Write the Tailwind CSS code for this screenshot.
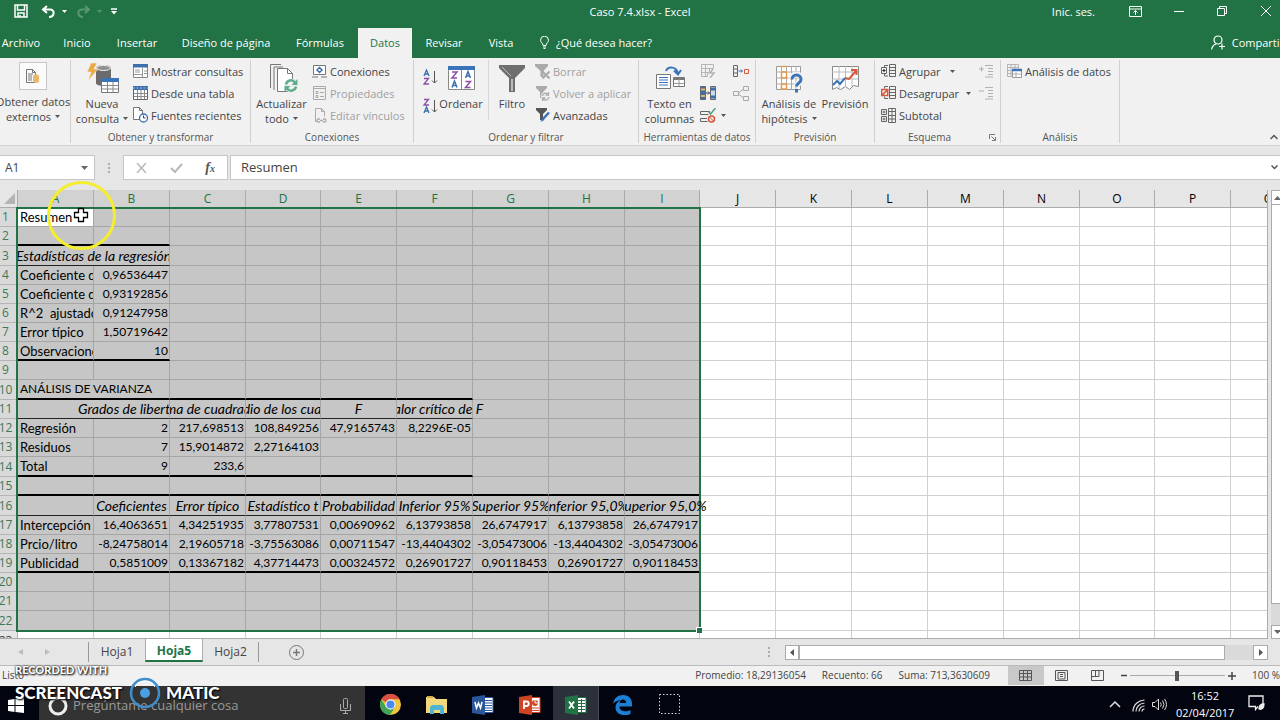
<!DOCTYPE html>
<html lang="es">
<head>
<meta charset="utf-8">
<title>Caso 7.4.xlsx - Excel</title>
<script src="https://cdn.jsdelivr.net/npm/@tailwindcss/browser@4"></script>
</head>
<body class="relative flex h-screen flex-col overflow-hidden bg-[#e6e6e6] font-['Open_Sans','Noto_Sans',sans-serif] text-[11px] leading-[15px] text-[#444]">

<header class="shrink-0 bg-[#217346] text-white">
  <div class="grid h-[28px] grid-cols-3 pb-[6px]">
    <div class="flex items-center gap-[9px] pl-[14px]">
      <button aria-label="Guardar"><svg width="14" height="14" viewBox="0 0 14 14" fill="none" stroke="#fff" stroke-width="1.5"><path d="M1 1h12v12H1zM3.500 1v5h7V1M4 13V9h6v4M6 11v2"/></svg></button>
      <button aria-label="Deshacer" class="ml-[4px] flex items-center gap-[6px]"><svg width="15" height="13" viewBox="0 0 15 13" fill="none" stroke="#fff" stroke-width="2"><path d="M6 1L2 4.500 6 8M2 4.500h7c5 0 5 7-1 7.500"/></svg><svg width="5" height="3"><path d="M0 0h5L2.500 3z" fill="#fff"/></svg></button>
      <button aria-label="Rehacer" class="flex items-center gap-[6px] opacity-25"><svg width="15" height="13" viewBox="0 0 15 13" fill="none" stroke="#fff" stroke-width="2"><path d="M9 1l4 3.500L9 8M13 4.500H6c-5 0-5 7 1 7.500"/></svg><svg width="5" height="3"><path d="M0 0h5L2.500 3z" fill="#fff"/></svg></button>
      <button aria-label="Personalizar"><svg width="6" height="7"><path d="M0 1h6" stroke="#fff" stroke-width="1.500"/><path d="M0 3h6L3 6.500z" fill="#fff"/></svg></button>
    </div>
    <h1 class="flex items-center justify-center">Caso 7.4.xlsx - Excel</h1>
    <div class="flex items-center justify-end pr-[9px]">
      <button>Inic. ses.</button>
      <button aria-label="Opciones de cinta" class="ml-[34px]"><svg width="13" height="11" viewBox="0 0 13 11" fill="none" stroke="#fff"><path d="M.5.5h12v10H.5zM.5 3h12M6.500 9V4.500M4.500 6.500l2-2 2 2"/></svg></button>
      <button aria-label="Minimizar" class="ml-[32px]"><svg width="10" height="10" stroke="#fff"><path d="M0 5.500h10"/></svg></button>
      <button aria-label="Restaurar" class="ml-[33px]"><svg width="10" height="10" viewBox="0 0 10 10" fill="none" stroke="#fff"><path d="M.5 2.500h7v7h-7zM2.500 2.500v-2h7v7h-2"/></svg></button>
      <button aria-label="Cerrar" class="ml-[34px]"><svg width="10" height="10" stroke="#fff"><path d="M0 0l10 10M10 0L0 10"/></svg></button>
    </div>
  </div>
  <nav class="flex h-[30px] items-stretch overflow-hidden whitespace-nowrap [&>button]:pb-[1px]">
    <button class="w-[50px] pr-[8px]">Archivo</button>
    <button class="w-[54px]">Inicio</button>
    <button class="w-[66px]">Insertar</button>
    <button class="w-[112px]">Diseño de página</button>
    <button class="w-[76px]">Fórmulas</button>
    <button class="w-[54px] bg-[#f1f1f1] text-[#217346]">Datos</button>
    <button class="w-[64px]">Revisar</button>
    <button class="w-[50px]">Vista</button>
    <button class="ml-[14px] flex items-center gap-[7px]"><svg width="9" height="13" viewBox="0 0 9 13" fill="none" stroke="#fff"><path d="M3 9.500C3 7 .5 6.500.5 4.200a4 4 0 0 1 8 0C8.500 6.500 6 7 6 9.500zM3 11h3M3.500 12.500h2"/></svg>¿Qué desea hacer?</button>
    <button class="-mr-[4px] ml-auto flex items-center gap-[7px]"><svg width="14" height="15" viewBox="0 0 14 15" fill="none" stroke="#fff" stroke-width="1.200"><circle cx="7" cy="5" r="4"/><path d="M.6 14.500c.4-3 2-4.500 4.400-5.500M8 11.500h6M11 8.500v6"/></svg>Compartir</button>
  </nav>
</header>

<!-- Cinta de opciones -->
<section class="flex h-[88px] shrink-0 border-b border-[#d2d2d2] bg-[#f1f1f1] pt-[2px] whitespace-nowrap text-[#444]">
  <div class="mb-[2px] flex w-[71px] shrink-0 flex-col border-r border-[#d0d0d0]">
    <button class="flex w-[66px] flex-col items-center pt-[2px]">
      <span class="mb-[4px] flex size-[28px] items-center justify-center border border-[#c6c6c6] bg-[#fafafa]"><svg width="16" height="16" viewBox="0 0 16 16" fill="none"><path d="M1.500 1.500h6l3 3v10h-9zM7.500 1.500v3h3M3 6h5M3 8h4M3 10h4M3 12h4" stroke="#777"/><path d="M8 8v5c0 2.500 6 2.500 6 0V8c0-2-6-2-6 0" fill="#e9b86b"/></svg></span>
      <span>Obtener datos</span><span class="flex items-center gap-[4px]">externos <svg width="5" height="3"><path d="M0 0h5L2.500 3z" fill="#555"/></svg></span>
    </button>
  </div>

  <div class="mb-[2px] flex w-[180px] shrink-0 flex-col border-r border-[#d0d0d0]">
    <div class="flex h-[71px]">
      <button class="flex w-[62px] flex-col items-center self-start pt-[3px]">
        <svg class="mb-[3px] ml-[2px]" width="32" height="30" viewBox="0 0 32 30"><path d="M9 5c0-4 15-4 15 0v15c0 4-15 4-15 0z" fill="#6b6b6b"/><ellipse cx="16.500" cy="5" rx="7" ry="2.500" fill="#909090" stroke="#f1f1f1"/><path d="M4 0h6L7 6h4L1 18l3-9H0z" fill="#eda943" stroke="#f1f1f1" stroke-width=".6"/><path d="M14.500 16.500h17v13h-17z" fill="#fff" stroke="#777"/><path d="M14 15h18v4H14z" fill="#3b73b9"/><path d="M15 22.500h16M15 26h16M20.500 19v10M26 19v10" stroke="#888"/></svg>
        <span>Nueva</span><span class="flex items-center gap-[4px]">consulta <svg width="5" height="3"><path d="M0 0h5L2.500 3z" fill="#555"/></svg></span>
      </button>
      <div class="flex flex-col">
        <button class="flex h-[22px] items-center gap-[3px]"><svg width="15" height="14" viewBox="0 0 15 14"><path d="M.5.500h14v13H.5z" fill="#fff" stroke="#888"/><path d="M0 0h15v3.500H0z" fill="#3b6fae"/><path d="M2 6h5M2 8h5M9.500 4v9M11 7h3M11 9.500h3M1 10.500h8" stroke="#999"/></svg>Mostrar consultas</button>
        <button class="flex h-[22px] items-center gap-[3px]"><svg width="15" height="14" viewBox="0 0 15 14"><path d="M.5.500h14v13H.5z" fill="#fff" stroke="#666"/><path d="M0 0h15v4H0z" fill="#3b6fae"/><path d="M0 2h15" stroke="#9fc0e6" stroke-dasharray="2 1.500"/><path d="M1 7.500h13M1 10.500h13M4.500 4v9M8 4v9M11.500 4v9" stroke="#888"/></svg>Desde una tabla</button>
        <button class="flex h-[22px] items-center gap-[3px]"><svg width="15" height="16" viewBox="0 0 15 16" fill="none"><path d="M.5.500h6l3 3v9h-9zM6.500.500v3h3" fill="#fff" stroke="#777"/><circle cx="10.500" cy="11" r="4" fill="#fff" stroke="#3b6fae" stroke-width="1.300"/><path d="M10.500 8.500V11h2" stroke="#444"/></svg>Fuentes recientes</button>
      </div>
    </div>
    <div class="text-center text-[10px] leading-[12px] text-[#555]">Obtener y transformar</div>
  </div>

  <div class="mb-[2px] flex w-[163px] shrink-0 flex-col border-r border-[#d0d0d0]">
    <div class="flex h-[71px]">
      <button class="flex w-[61px] flex-col items-center self-start pt-[4px]">
        <svg class="mb-[3px] ml-[4px]" width="28" height="29" viewBox="0 0 28 29"><path d="M.5 24V.5H11M4 26V3h9" fill="none" stroke="#777"/><path d="M7.500 4.500h10l5 5v18h-15z" fill="#fff" stroke="#777"/><path d="M17.500 4.500v5h5" fill="none" stroke="#777"/><circle cx="21" cy="21.500" r="7" fill="#f1f1f1"/><path d="M16 20.500a5 5 0 0 1 9-2M26 22.500a5 5 0 0 1-9 2" fill="none" stroke="#5fae8b" stroke-width="2.500"/><path d="M27.500 15v6h-6zM14.500 28v-6h6z" fill="#5fae8b"/></svg>
        <span>Actualizar</span><span class="flex items-center gap-[4px]">todo <svg width="5" height="3"><path d="M0 0h5L2.500 3z" fill="#555"/></svg></span>
      </button>
      <div class="flex flex-col">
        <button class="flex h-[22px] items-center gap-[3px]"><svg width="15" height="13" viewBox="0 0 15 13" fill="none"><path d="M1.500.500h12v9h-12z" fill="#fff" stroke="#777"/><path d="M0 12h6M9 12h6" stroke="#777"/><path d="M7.500 2.500L10 5 7.500 7.500 5 5z" stroke="#3b6fae" stroke-width="1.500"/></svg>Conexiones</button>
        <button class="flex h-[22px] items-center gap-[3px] text-[#a0a0a0]" disabled><svg width="15" height="14" viewBox="0 0 15 14" fill="none" stroke="#aaa"><path d="M1.500.500h12v13h-12zM1.500 2.500h12M4 5.500h2v2H4zM4 9.500h2v2H4zM8 6.500h4M8 10.500h4"/></svg>Propiedades</button>
        <button class="flex h-[22px] items-center gap-[3px] text-[#a0a0a0]" disabled><svg width="15" height="15" viewBox="0 0 15 15" fill="none" stroke="#aaa"><path d="M5 13.500H3.500V.500h6l3 3v5M9.500.500v3h3"/><path d="M8 11H6.500a1.500 1.500 0 0 0 0 3H8M11 11h1.500a1.500 1.500 0 0 1 0 3H11M8 12.500h3" stroke-width="1.300"/></svg>Editar vínculos</button>
      </div>
    </div>
    <div class="text-center text-[10px] leading-[12px] text-[#555]">Conexiones</div>
  </div>

  <div class="mb-[2px] flex w-[225px] shrink-0 flex-col border-r border-[#d0d0d0]">
    <div class="flex h-[71px]">
      <div class="flex w-[24px] flex-col items-end gap-[12px] pt-[9px]">
        <button aria-label="Ordenar de A a Z"><svg width="15" height="17" viewBox="0 0 15 17" fill="none"><path d="M1 7l2.500-6L6 7M2 5h3" stroke="#3b6fae" stroke-width="1.300"/><path d="M1 9.500h4.500L1 15h5" stroke="#8a4fa8" stroke-width="1.300"/><path d="M11.500 2v12M9 11.500l2.500 2.500 2.500-2.500" stroke="#555"/></svg></button>
        <button aria-label="Ordenar de Z a A"><svg width="15" height="17" viewBox="0 0 15 17" fill="none"><path d="M1 1.500h4.500L1 7h5" stroke="#8a4fa8" stroke-width="1.300"/><path d="M1 15l2.500-6L6 15M2 13h3" stroke="#3b6fae" stroke-width="1.300"/><path d="M11.500 2v12M9 11.500l2.500 2.500 2.500-2.500" stroke="#555"/></svg></button>
      </div>
      <button class="flex w-[46px] flex-col items-center self-start pt-[6px]">
        <svg class="mb-[6px]" width="27" height="24" viewBox="0 0 27 24" fill="none"><path d="M.5.500h26v23H.5z" fill="#fff" stroke="#888"/><path d="M0 0h27v4H0z" fill="#3b73b9"/><path d="M13.500 4v19" stroke="#888"/><g stroke-width="1.500"><path d="M4 6h5l-5 6h5M17.500 15.500h5l-5 6h5" stroke="#8a4fa8"/><path d="M4 21.500l2.500-6.500L9 21.500M5 19.500h3M17.500 12L20 5.500l2.500 6.500M18.500 10h3" stroke="#3b6fae"/></g></svg>
        <span>Ordenar</span>
      </button>
      <div class="ml-[4px] h-[60px] w-px bg-[#d6d6d6]"></div>
      <button class="flex w-[46px] flex-col items-center self-start pt-[5px]">
        <svg class="mb-[4px]" width="26" height="27" viewBox="0 0 26 27"><path d="M0 0h26v3l-10 10v14h-6V13L0 3z" fill="#6e6e6e"/><path d="M13 14v12" stroke="#bbb" stroke-width="2"/><path d="M3 2l9 9" stroke="#bbb"/></svg>
        <span>Filtro</span>
      </button>
      <div class="flex flex-col">
        <button class="flex h-[22px] items-center gap-[3px] text-[#a0a0a0]" disabled><svg width="15" height="15" viewBox="0 0 15 15"><path d="M0 0h13v2L8.500 7v6H5.500V7L0 2z" fill="#aaa"/><path d="M7.500 7.500l7 7M14.500 7.500l-7 7" stroke="#aaa" stroke-width="2"/></svg>Borrar</button>
        <button class="flex h-[22px] items-center gap-[3px] text-[#a0a0a0]" disabled><svg width="15" height="15" viewBox="0 0 15 15"><path d="M1 0h11v2L8 6v6H5V6L1 2z" fill="#aaa"/><circle cx="10.500" cy="10.500" r="4.500" fill="#f1f1f1"/><path d="M7.500 10a3 3 0 0 1 5-2M14 11a3.500 3.500 0 0 1-6 2M13.500 6v3h-3M7.500 15v-3h3" fill="none" stroke="#aaa" stroke-width="1.300"/></svg>Volver a aplicar</button>
        <button class="flex h-[22px] items-center gap-[3px]"><svg width="15" height="14" viewBox="0 0 15 14"><path d="M1 0h11v2L8 6v6H5V6L1 2z" fill="#555"/><path d="M14 4.500l-6.500 7" stroke="#3b73b9" stroke-width="2.500"/><path d="M7.500 10l-2 4 4-2z" fill="#3b73b9"/></svg>Avanzadas</button>
      </div>
    </div>
    <div class="text-center text-[10px] leading-[12px] text-[#555]">Ordenar y filtrar</div>
  </div>

  <div class="mb-[2px] flex w-[117px] shrink-0 flex-col border-r border-[#d0d0d0]">
    <div class="flex h-[71px]">
      <button class="flex w-[61px] flex-col items-center self-start pt-[5px]">
        <svg class="mb-[6px] ml-[2px]" width="29" height="25" viewBox="0 0 29 25" fill="none"><path d="M.5 9.500h14v14H.5z" fill="#fff" stroke="#777"/><path d="M3 12.500h9M3 15h9M3 17.500h9M3 20h9" stroke="#3b73b9"/><path d="M17.500 12.500h11v9h-11z" fill="#fff" stroke="#777"/><path d="M18 14h10" stroke="#777" stroke-width="2"/><path d="M18 18.500h10M23 14v7" stroke="#999"/><path d="M10 6c2-5 11-5 12 3M18 5.500l4 4 3-4.500" stroke="#3b73b9" stroke-width="2"/></svg>
        <span>Texto en</span><span>columnas</span>
      </button>
      <div class="grid grid-cols-[33px_20px] grid-rows-[22px_22px_22px] items-center">
        <button aria-label="Relleno rápido"><svg width="16" height="14" viewBox="0 0 16 14" fill="none" stroke="#b4b4b4"><path d="M1.500.500h12v4h-12zM1.500 4.500h8v4h-8zM1.500 8.500h6v4h-6zM5.500.500v12"/><path d="M13 5l-3 4h4l-4 5" stroke-width="1.500"/></svg></button>
        <button aria-label="Consolidar"><svg width="16" height="12" viewBox="0 0 16 12" fill="none"><path d="M.5.500h4v11h-4zM.5 4h4M.5 8h4" stroke="#666"/><path d="M5.500 6h4M8 4.500L9.500 6 8 7.500" stroke="#3b6fae"/><path d="M11.500 4.500h4v4h-4z" stroke="#d9583b"/></svg></button>
        <button aria-label="Quitar duplicados"><svg width="16" height="14" viewBox="0 0 16 14" fill="none"><path d="M.5.500h5v13h-5z" fill="#3b6fae" stroke="#666"/><path d="M1 3.500h4M1 10h4" stroke="#e7b35d" stroke-width="2"/><path d="M10.500.500h5v13h-5z" fill="#cbdcf0" stroke="#666"/><path d="M11 3h4M11 11h4" stroke="#3b6fae" stroke-width="3"/><path d="M6 7h3.500M8 5.500L9.500 7 8 8.500" stroke="#444"/></svg></button>
        <button aria-label="Relaciones"><svg width="16" height="15" viewBox="0 0 16 15" fill="none" stroke="#aaa"><path d="M.5 5.500h5v4h-5zM10.500.500h5v4h-5zM10.500 10.500h5v4h-5zM5.500 7l5-4M5.500 8l5 4"/></svg></button>
        <button aria-label="Validación de datos" class="flex items-center gap-[5px]"><svg width="16" height="15" viewBox="0 0 16 15" fill="none"><path d="M10 3.500H.5v3h8M7 10.500H.5v3h7" stroke="#666"/><path d="M8.500 3.500l2 2.500 5-6" stroke="#4ba27b" stroke-width="1.500"/><circle cx="11.500" cy="11" r="3" stroke="#d9583b" stroke-width="1.500"/><path d="M9.500 9l4 4" stroke="#d9583b"/></svg><svg width="5" height="3"><path d="M0 0h5L2.500 3z" fill="#555"/></svg></button>
      </div>
    </div>
    <div class="text-center text-[10px] leading-[12px] text-[#555]">Herramientas de datos</div>
  </div>

  <div class="mb-[2px] flex w-[119px] shrink-0 flex-col border-r border-[#d0d0d0]">
    <div class="flex h-[71px]">
      <button class="flex w-[66px] flex-col items-center self-start pt-[5px]">
        <svg class="mb-[3px] ml-[2px]" width="28" height="28" viewBox="0 0 28 28" fill="none"><path d="M.5 1.500h24v23H.5z" fill="#fff" stroke="#999"/><path d="M5.500 1v23M10.500 1v23M15.500 1v23M20 1v23M0 7h24M0 13h24M0 19h24" stroke="#aaa"/><path d="M5.500 7h5v6h-5zM5.500 19h5v5h-5zM5.500 1.500h5" stroke="#e59a4f" stroke-width="1.500"/><path d="M15.500 14c0-6 10-6 10 0 0 4-5 3.500-5 8" stroke="#f1f1f1" stroke-width="6"/><path d="M16 14.500c0-6 9-6 9 0 0 4-4.500 3-4.500 7M20.500 24v3.500" stroke="#3b73b9" stroke-width="3"/></svg>
        <span>Análisis de</span><span class="flex items-center gap-[4px]">hipótesis <svg width="5" height="3"><path d="M0 0h5L2.500 3z" fill="#555"/></svg></span>
      </button>
      <button class="flex w-[46px] flex-col items-center self-start pt-[6px]">
        <svg class="mb-[6px]" width="27" height="24" viewBox="0 0 27 24" fill="none"><path d="M.5.500h26v20l-5-1-4 4-4-3-5 3-4-2-4 2z" fill="#fff" stroke="#888"/><path d="M7 0v22M13.500 0v21M20 0v20M0 6h26M0 13h26" stroke="#bbb"/><path d="M1 19l4-4 3 3 5-6" stroke="#3b73b9" stroke-width="2"/><path d="M13 12l4 1 7-8M19 4h5.500v5" stroke="#d9583b" stroke-width="2"/></svg>
        <span>Previsión</span>
      </button>
    </div>
    <div class="text-center text-[10px] leading-[12px] text-[#555]">Previsión</div>
  </div>

  <div class="mb-[2px] flex w-[126px] shrink-0 flex-col border-r border-[#d0d0d0]">
    <div class="flex h-[71px] justify-between pr-[7px] pl-[6px]">
      <div class="flex flex-col">
        <button class="flex h-[22px] items-center gap-[3px]"><svg width="15" height="14" viewBox="0 0 15 14" fill="none" stroke="#666"><path d="M8.500.500h6v12h-6zM8.500 3.500h6M8.500 6.500h6M8.500 9.500h6M7 1.500H3.500v2M7 12H3.500v-2M.5 3.500h5v6h-5z"/><path d="M1.500 6.500h3M3 5v3" stroke="#222"/></svg>Agrupar<svg class="ml-[6px]" width="5" height="3"><path d="M0 0h5L2.500 3z" fill="#555"/></svg></button>
        <button class="flex h-[22px] items-center gap-[3px]"><svg width="15" height="14" viewBox="0 0 15 14" fill="none" stroke="#666"><path d="M8.500.500h6v12h-6zM8.500 3.500h6M8.500 6.500h6M8.500 9.500h6M7 .500H3.500v2M7 12.500H3.500v-2"/><path d="M.7 3.500h6v6h-6zM.7 9.500l6-6" stroke="#d9583b" stroke-width="1.500"/></svg>Desagrupar<svg class="ml-[4px]" width="5" height="3"><path d="M0 0h5L2.500 3z" fill="#555"/></svg></button>
        <button class="flex h-[22px] items-center gap-[3px]"><svg width="15" height="15" viewBox="0 0 15 15" fill="none" stroke="#666"><path d="M7.500.500h7v14h-7zM7.500 3.500h7M7.500 7.500h7M7.500 11h7M11 .500v14M.5 1.500h5v5h-5zM.5 8.500h5v5h-5zM1.500 4h3M3 2.500v3M1.500 11h3M3 9.500v3"/></svg>Subtotal</button>
      </div>
      <div class="flex flex-col">
        <button class="flex h-[22px] items-center" aria-label="Mostrar detalle"><svg width="14" height="13" viewBox="0 0 14 13" stroke="#b0b0b0"><path d="M0 4h5M2.500 1.500v5M6 .500h8M9 3.500h5M9 6.500h5M9 9.500h5M6 12h8"/></svg></button>
        <button class="flex h-[22px] items-center" aria-label="Ocultar detalle"><svg width="14" height="13" viewBox="0 0 14 13" stroke="#b0b0b0"><path d="M0 4h5M6 .500h8M9 3.500h5M9 6.500h5M9 9.500h5M6 12h8"/></svg></button>
      </div>
    </div>
    <div class="flex items-center justify-end gap-[38px] pr-[4px] text-[10px] leading-[12px] text-[#555]">Esquema<button aria-label="Cuadro de diálogo Esquema"><svg width="7" height="7" viewBox="0 0 7 7" fill="none" stroke="#777"><path d="M.5 5V.500H6M2.500 2.500L6 6M6.500 3v3.500H3"/></svg></button></div>
  </div>

  <div class="mb-[2px] flex w-[119px] shrink-0 flex-col border-r border-[#d0d0d0]">
    <div class="flex h-[71px] pl-[6px]">
      <button class="flex h-[22px] items-center gap-[3px]"><svg width="15" height="15" viewBox="0 0 15 15" fill="none"><path d="M.5.500h11v12H.5zM4 .500v12M8 .500v12M.5 3.500h11M.5 6.500h11M.5 9.500h11" stroke="#b5b5b5"/><path d="M5.500 5.500h9v8h-9z" fill="#fff" stroke="#999"/><path d="M5 6h10" stroke="#3b73b9" stroke-width="2.500"/><path d="M6 10h8M9 8v5" stroke="#aaa"/></svg>Análisis de datos</button>
    </div>
    <div class="text-center text-[10px] leading-[12px] text-[#555]">Análisis</div>
  </div>
  <button class="mt-auto mr-[2px] mb-[5px] ml-auto" aria-label="Contraer la cinta"><svg width="8" height="6" fill="none" stroke="#555" stroke-width="1.500"><path d="M.5 5L4 1.500 7.500 5"/></svg></button>
</section>

<!-- Barra de fórmulas -->
<section class="mt-[9px] flex h-[25px] shrink-0 border-[#c6c6c6]">
  <div class="flex w-[95px] shrink-0 items-center border-y border-r border-[#c6c6c6] bg-white pr-[6px]">
    <input aria-label="Cuadro de nombres" value="A1" class="w-full min-w-0 bg-transparent pl-[5px] text-[12px] outline-none">
    <button aria-label="Lista de nombres"><svg width="7" height="4"><path d="M0 0h7L3.500 4z" fill="#666"/></svg></button>
  </div>
  <div class="flex w-[28px] shrink-0 items-center justify-center"><svg width="2" height="10"><path d="M1 0v10" stroke="#999" stroke-width="1.500" stroke-dasharray="2 2"/></svg></div>
  <div class="flex w-[105px] shrink-0 items-center justify-between border border-[#c6c6c6] bg-white pr-[12px] pl-[12px]">
    <button aria-label="Cancelar"><svg width="11" height="10" stroke="#b8b8b8" stroke-width="1.500"><path d="M1 0l9 10M10 0L1 10"/></svg></button>
    <button aria-label="Introducir"><svg width="13" height="10" fill="none" stroke="#b8b8b8" stroke-width="2"><path d="M1 5l4 4 7-8"/></svg></button>
    <button aria-label="Insertar función" class="font-['Liberation_Serif',serif] text-[14px] font-bold italic text-[#555]">f<span class="text-[10px]">x</span></button>
  </div>
  <div class="ml-[2px] flex flex-1 items-center border-y border-l border-[#c6c6c6] bg-white">
    <input aria-label="Barra de fórmulas" value="Resumen" class="min-w-0 flex-1 bg-transparent pl-[10px] text-[13px] outline-none">
    <button aria-label="Expandir" class="mr-[2px]"><svg width="7" height="5" fill="none" stroke="#555" stroke-width="1.500"><path d="M.5.500l3 3 3-3"/></svg></button>
  </div>
</section>

<!-- Hoja -->
<main class="flex min-h-0 flex-1 pt-[10px]">
  <div class="relative min-w-0 flex-1 overflow-hidden border-b border-[#ababab]">
    <table class="w-[1306px] table-fixed border-separate border-spacing-0 font-['Lato',sans-serif] text-[12px] leading-[18px] text-black">
      <colgroup id="cols"></colgroup>
      <thead id="head"></thead>
      <tbody id="body" class="bg-white"></tbody>
    </table>
    <div class="pointer-events-none absolute top-[17px] left-[16px] h-[425px] w-[685px] border-2 border-[#217346]">
      <div class="absolute -right-[3px] -bottom-[3px] size-[6px] border-t border-l border-white bg-[#217346]"></div>
    </div>
  </div>
  <div class="flex w-[13px] shrink-0 flex-col overflow-hidden border-l border-[#ababab] pl-[3px]">
    <button aria-label="Subir" class="flex h-[15px] w-[17px] shrink-0 items-center border border-[#ababab] bg-white pl-[2px]"><svg width="7" height="4"><path d="M0 4h7L3.500 0z" fill="#666"/></svg></button>
    <div class="min-h-0 w-[17px] flex-1 border-x border-b border-[#ababab] bg-white"></div>
    <div class="h-[21px] w-[17px] shrink-0 bg-[#dadada]"></div>
    <button aria-label="Bajar" class="flex h-[14px] w-[17px] shrink-0 items-center border border-[#ababab] bg-white pl-[2px]"><svg width="7" height="4"><path d="M0 0h7L3.500 4z" fill="#666"/></svg></button>
  </div>
</main>

<nav class="flex h-[26px] shrink-0 items-stretch text-[12px]">
  <div class="my-[3px] flex w-[89px] items-center gap-[22px] border-r border-[#999] pl-[18px]">
    <button aria-label="Hoja anterior"><svg width="5" height="6"><path d="M5 0v6L0 3z" fill="#bbb"/></svg></button>
    <button aria-label="Hoja siguiente"><svg width="5" height="6"><path d="M0 0v6l5-3z" fill="#bbb"/></svg></button>
  </div>
  <button class="w-[56px] pb-[2px]">Hoja1</button>
  <button class="-mt-px mb-[3px] w-[58px] border-x border-b-2 border-x-[#ababab] border-b-[#217346] bg-white pt-[2px] font-bold text-[#217346]">Hoja5</button>
  <button class="my-[3px] w-[56px] border-r border-[#999] pb-[2px]">Hoja2</button>
  <button aria-label="Hoja nueva" class="ml-[30px]"><svg width="15" height="15" fill="none" stroke="#777"><circle cx="7.500" cy="7.500" r="7"/><path d="M4 7.500h7M7.500 4v7" stroke-width="1.500"/></svg></button>
  <div class="mr-[12px] ml-auto flex items-center">
    <svg class="mr-[15px]" width="2" height="10"><path d="M1 0v10" stroke="#999" stroke-width="1.500" stroke-dasharray="2 2"/></svg>
    <div class="flex h-[15px] w-[483px] justify-between bg-[#dadada]">
      <button aria-label="Izquierda" class="flex w-[14px] items-center justify-center border border-[#ababab] bg-white"><svg width="4" height="7"><path d="M4 0v7L0 3.500z" fill="#555"/></svg></button>
      <div class="mr-auto w-[426px] border border-[#ababab] bg-white"></div>
      <button aria-label="Derecha" class="flex w-[15px] items-center justify-center border border-[#ababab] bg-white"><svg width="4" height="7"><path d="M0 0v7l4-3.500z" fill="#555"/></svg></button>
    </div>
  </div>
</nav>

<footer class="flex h-[21px] shrink-0 items-center border-t border-[#bbb] bg-[#f1f1f1] pb-[1px] text-[10px] whitespace-nowrap">
  <span class="pl-[2px]">Listo</span>
  <span class="ml-auto">Promedio: 18,29136054</span><span class="ml-[16px]">Recuento: 66</span><span class="ml-[16px]">Suma: 713,3630609</span>
  <button aria-label="Normal" class="ml-[18px] flex h-full w-[36px] items-center justify-center bg-[#c8c8c8]"><svg width="13" height="11" fill="none" stroke="#555"><path d="M.5.500h12v10H.5zM.5 3.500h12M.5 7h12M4.500.500v10M8.500.500v10"/></svg></button>
  <button aria-label="Diseño de página" class="flex w-[36px] justify-center"><svg width="13" height="11" fill="none" stroke="#555"><path d="M.5.500h12v10H.5zM3 2.500h7v6.500H3zM5 4.500h3M5 6.500h3"/></svg></button>
  <button aria-label="Salto de página" class="flex w-[36px] justify-center"><svg width="13" height="11" fill="none" stroke="#555"><path d="M.5.500h12v10H.5zM4.500.500v6M.5 6.500h7.500V.500"/></svg></button>
  <button aria-label="Alejar" class="ml-[4px]"><svg width="7" height="7" stroke="#444" stroke-width="1.500"><path d="M1 3.500h6"/></svg></button>
  <div class="mx-[3px] flex h-[11px] w-[95px] items-center justify-center bg-[linear-gradient(#aaa,#aaa)] bg-[length:100%_1px] bg-center bg-no-repeat"><span class="h-[10px] w-[4px] bg-[#555]"></span></div>
  <button aria-label="Acercar"><svg width="8" height="8" stroke="#444" stroke-width="1.500"><path d="M0 4h8M4 0v8"/></svg></button>
  <span class="ml-[16px]">100 %</span>
</footer>

<section class="flex h-[34px] shrink-0 items-stretch bg-[#02040f] text-white">
  <button aria-label="Inicio" class="flex w-[39px] items-center pt-[4px] pl-[8px]"><svg width="16" height="15" fill="#fff"><path d="M0 2l6.500-1v6H0zM7.500.900L16 0v7H7.500zM0 8h6.500v6L0 13zM7.500 8H16v7l-8.500-1z"/></svg></button>
  <label class="flex w-[326px] items-center bg-[#333] pt-[5px] pr-[14px] pl-[9px]">
    <svg width="20" height="20" fill="none" stroke="#eee" stroke-width="3"><circle cx="10" cy="10" r="8"/></svg>
    <input aria-label="Buscar" placeholder="Pregúntame cualquier cosa" class="ml-[5px] min-w-0 flex-1 bg-transparent text-[13px] outline-none placeholder:text-[#999]">
    <svg width="11" height="16" fill="none" stroke="#aaa"><rect x="3.500" y=".5" width="4" height="10" rx="1"/><path d="M.5 6v6.500h10V6M5.500 12.500v3M3 15.500h5"/></svg>
  </label>
  <div class="flex items-stretch pl-[2px]">
    <button aria-label="Chrome" class="flex w-[46px] items-center justify-center pt-[3px]"><svg width="21" height="21" viewBox="0 0 21 21"><circle cx="10.500" cy="10.500" r="10.500" fill="#f2c53d"/><path d="M1.400 5.300A10.500 10.500 0 0 1 19.600 5.300H10.500A5 5 0 0 0 6 8.500z" fill="#dc5144"/><path d="M1.400 5.300A10.500 10.500 0 0 0 10 21l4.700-7.500-4.200 2L6 13z" fill="#3fa457"/><circle cx="10.500" cy="10.500" r="5" fill="#fff"/><circle cx="10.500" cy="10.500" r="4" fill="#4a8af0"/></svg></button>
    <button aria-label="Explorador" class="flex w-[46px] items-center justify-center pt-[3px]"><svg width="21" height="18"><path d="M0 1h8l2 2h11v14H0z" fill="#f3d77b"/><path d="M1 0h6v2H1z" fill="#d9aa46"/><path d="M4 18v-7l2-2h10l2 2v7h-4v-4H8v4z" fill="#4fb3d4"/></svg></button>
    <button aria-label="Word" class="flex w-[47px] items-center justify-center pt-[3px]"><svg width="22" height="20" fill="none"><path d="M11 2.500h10v15H11z" fill="#fff" stroke="#2b579a"/><path d="M13 5.500h7M13 8h7M13 10.500h7M13 13h7M13 15.500h7" stroke="#2b579a"/><path d="M0 2l13-2v20L0 18z" fill="#2b579a"/><path d="M3 7l1.500 6L6.500 8l2 5L10 7" stroke="#fff" stroke-width="1.500"/></svg></button>
    <button aria-label="PowerPoint" class="flex w-[47px] items-center justify-center pt-[3px]"><svg width="22" height="20" fill="none"><path d="M11 2.500h10v15H11z" fill="#fff" stroke="#d04423"/><circle cx="16" cy="8" r="3" fill="#d04423"/><path d="M16 8V4M16 8h4" stroke="#fff"/><path d="M13 13h7M13 15.500h7" stroke="#d04423"/><path d="M0 2l13-2v20L0 18z" fill="#d04423"/><path d="M5 14V6.500h2.500a2 2 0 0 1 0 4.500H5" stroke="#fff" stroke-width="1.800"/></svg></button>
    <button aria-label="Excel" class="flex w-[46px] items-center justify-center border-r border-[#444a55] bg-[#2b303a] pt-[3px]"><svg width="22" height="20" fill="none"><path d="M11 2.500h10v15H11z" fill="#fff" stroke="#217346"/><path d="M13 5.500h7M13 8.500h7M13 11.500h7M13 14.500h7M16.500 4v13" stroke="#217346"/><path d="M0 2l13-2v20L0 18z" fill="#217346"/><path d="M4 6.500l5 7M9 6.500l-5 7" stroke="#fff" stroke-width="1.800"/></svg></button>
    <button aria-label="Edge" class="flex w-[47px] items-center justify-center pt-[3px]"><svg width="19" height="20"><path d="M0 9C1 3 5 0 10 0c6 0 9 4 9 9v2.500H6.500c0 5 7 6 11 3.500v4C11 22 2.500 19.500 2.500 12.500 2.500 9 4.500 6.500 8 5 4 5.500 1.500 7 0 9zM6.500 8H13c0-5-6-4.500-6.500 0z" fill="#1b7fd6"/></svg></button>
    <button aria-label="Captura" class="flex w-[46px] items-center justify-center pt-[2px]"><svg width="21" height="20" fill="none" stroke="#ddd"><rect x=".5" y=".5" width="20" height="19" stroke-dasharray="1.500 2"/></svg></button>
  </div>
  <div class="ml-auto flex items-center pr-[15px]">
    <button aria-label="Iconos ocultos" class="pt-[2px]"><svg width="12" height="7" fill="none" stroke="#ddd" stroke-width="1.500"><path d="M1 6l5-5 5 5"/></svg></button>
    <svg class="mt-[5px] ml-[11px]" width="13" height="13" fill="none" stroke="#ddd" stroke-width="1.200"><path d="M1 12.500C1 6 6 1.500 12.500 1M4 12.500C4 8 7.500 4.500 12.500 4M7 12.500c0-3 2.500-5.500 5.500-5.500M10 12.500c0-1.500 1-2.500 2.500-2.500"/></svg>
    <svg class="mt-[3px] ml-[7px]" width="15" height="13" fill="none" stroke="#ddd"><path d="M.5 4.500h2.500L6.500 1v11L3 8.500H.5zM8.500 4.500q1.500 2 0 4M10.500 2.500q3 4 0 8M12.500 1q4 5.500 0 11"/></svg>
    <div class="ml-[9px] w-[58px] pt-[2px] text-center leading-[17px]">16:52<br>02/04/2017</div>
    <svg class="ml-[14px]" width="17" height="16" fill="none" stroke="#eee" stroke-width="1.300"><path d="M10 11.500l-2.500 3v-3H1V1h14v8"/><path d="M16 9c-4 0-5 2-5 5 3 1 5-1 5-5z" fill="#eee"/></svg>
  </div>
</section>

<!-- Marca de agua de la grabación -->
<div class="pointer-events-none absolute bottom-[11px] left-[15px] font-['Lato',sans-serif] font-black whitespace-nowrap text-white [text-shadow:1px_1px_2px_#000,0_0_2px_#000]">
  <div class="text-[11px] leading-[14px]">RECORDED WITH</div>
  <div class="flex items-center text-[17px] leading-[28px]"><span class="w-[114px]">SCREENCAST</span><svg class="mr-[5px]" width="32" height="32" fill="none"><circle cx="16" cy="16" r="14" stroke="#3f8fcc" stroke-width="2.500"/><path d="M6 10a11.500 11.500 0 0 1 20 0" stroke="#fff"/><circle cx="16" cy="16" r="5" fill="#4b9fe0"/></svg>MATIC</div>
</div>

<!-- Puntero -->
<div class="pointer-events-none absolute top-[181px] left-[47px] size-[69px] rounded-full border-3 border-[#f4ee2f]"></div>
<svg class="pointer-events-none absolute top-[207px] left-[73px]" width="16" height="16" fill="#fff" stroke="#000" stroke-width="1.300"><path d="M5.500 1.500h5v4h4v5h-4v4h-5v-4h-4v-5h4z"/></svg>

<script>
const W75 = [4, 9, 15];
const LETTERS = [...'ABCDEFGHIJKLMNOPQ'];
document.getElementById('cols').innerHTML = '<col class="w-[18px]">' +
  LETTERS.map((l, i) => W75.includes(i + 1) ? '<col class="w-[75px]">' : '<col class="w-[76px]">').join('');
document.getElementById('head').innerHTML = '<tr class="h-[18px] font-[\'Open_Sans\',sans-serif]">' +
  '<th class="border-r border-b border-[#ababab] p-0"><svg class="ml-auto" width="14" height="14"><path d="M12 1v11H1z" fill="#b4b4b4"/></svg></th>' +
  LETTERS.map((l, i) => i < 9
    ? `<th scope="col" class="border-r border-b border-[#ababab] bg-[#d2d2d2] p-0 leading-[17px] font-normal text-[#217346]">${l}</th>`
    : `<th scope="col" class="border-r border-b border-[#ababab] p-0 leading-[17px] font-normal">${l}</th>`).join('') + '</tr>';

/* Prefijos: "l" izquierda, "r" derecha, "c" centrado en cursiva */
const DATA = {
  1: ['lResumen'],
  3: ['2cEstadísticas de la regresión', null],
  4: ['lCoeficiente de correlación', 'r0,96536447'],
  5: ['lCoeficiente de determinación', 'r0,93192856'],
  6: ['lR^2  ajustado', 'r0,91247958'],
  7: ['lError típico', 'r1,50719642'],
  8: ['lObservaciones', 'r10'],
  10: ['2tANÁLISIS DE VARIANZA', null],
  11: ['2gGrados de libertad', null, 'cSuma de cuadrados', 'cPromedio de los cuadrados', 'cF', 'oValor crítico de F'],
  12: ['lRegresión', 'r2', 'r217,698513', 'r108,849256', 'r47,9165743', 'r8,2296E-05'],
  13: ['lResiduos', 'r7', 'r15,9014872', 'r2,27164103'],
  14: ['lTotal', 'r9', 'r233,6'],
  16: ['', 'cCoeficientes', 'cError típico', 'cEstadístico t', 'cProbabilidad', 'cInferior 95%', 'cSuperior 95%', 'cInferior 95,0%', 'oSuperior 95,0%'],
  17: ['lIntercepción', 'r16,4063651', 'r4,34251935', 'r3,77807531', 'r0,00690962', 'r6,13793858', 'r26,6747917', 'r6,13793858', 'r26,6747917'],
  18: ['lPrcio/litro', 'r-8,24758014', 'r2,19605718', 'r-3,75563086', 'r0,00711547', 'r-13,4404302', 'r-3,05473006', 'r-13,4404302', 'r-3,05473006'],
  19: ['lPublicidad', 'r0,5851009', 'r0,13367182', 'r4,37714473', 'r0,00324572', 'r0,26901727', 'r0,90118453', 'r0,26901727', 'r0,90118453'],
};
const THICK = {2: 2, 8: 2, 10: 6, 14: 6, 15: 9, 19: 9};
const THIN = {3: 2, 11: 6, 16: 9};
const KIND = {
  l: 'flex h-[17px] items-center overflow-hidden pl-[2px] text-[13px] whitespace-pre',
  t: 'flex h-[17px] items-center overflow-hidden pl-[2px] whitespace-pre',
  r: 'flex h-[17px] items-center justify-end overflow-hidden pr-[1px] whitespace-pre',
  c: 'flex h-[17px] items-center justify-center overflow-hidden text-[14px] whitespace-pre italic',
  g: 'flex h-[17px] items-center overflow-hidden pl-[60px] text-[14px] whitespace-pre italic',
  o: 'relative z-10 flex h-[17px] items-center justify-center text-[14px] whitespace-pre italic [clip-path:inset(0_-20px_0_0)]',
};
let out = '';
for (let r = 1; r <= 23; r++) {
  out += [3, 10, 14, 16, 22].includes(r) ? '<tr class="h-[20px]">' : '<tr class="h-[19px]">';
  out += r < 23
    ? `<th scope="row" class="border-r border-b border-[#b5b5b5] bg-[#d9d9d9] p-0 pr-[6px] font-['Open_Sans',sans-serif] font-normal text-[#3c7a58]"><div class="flex h-[18px] items-center justify-center">${r}</div></th>`
    : `<th scope="row" class="border-r border-[#b5b5b5] bg-[#e6e6e6] p-0 pr-[6px] font-['Open_Sans',sans-serif] font-normal text-[#444]"><div class="flex h-[18px] items-center justify-center">${r}</div></th>`;
  for (let c = 0; c < 17; c++) {
    let v = (DATA[r] || [])[c];
    if (v === null) continue;
    let span = '';
    if (v && v[0] === '2') { span = ' colspan="2"'; v = v.slice(1); }
    const sel = c < 9 && r < 23;
    let cls = 'border-r p-0 ';
    cls += sel ? (r === 1 && c === 0 ? 'bg-white border-r-[#a6a6a6] ' : 'bg-[#c6c6c6] border-r-[#a6a6a6] ') : 'border-r-[#d0d0d0] ';
    if (c < (THICK[r] || 0)) cls += 'border-b-2 border-b-black';
    else if (c < (THIN[r] || 0)) cls += 'border-b border-b-[#222]';
    else cls += sel ? 'border-b border-b-[#a6a6a6]' : 'border-b border-b-[#d0d0d0]';
    out += `<td class="${cls}"${span}>` + (v ? `<div class="${KIND[v[0]]}">${v.slice(1)}</div>` : '') + '</td>';
  }
  out += '</tr>';
}
document.getElementById('body').innerHTML = out;
</script>
</body>
</html>
